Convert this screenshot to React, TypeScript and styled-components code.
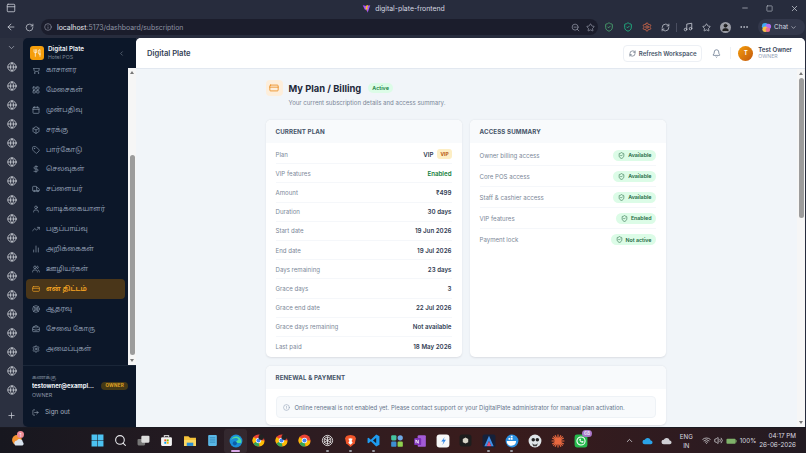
import { ReactNode } from "react";
import styled, { createGlobalStyle } from "styled-components";
import {
  ArrowLeft,
  BarChart2,
  Bell,
  Box,
  BriefcaseBusiness,
  Calendar,
  ChevronDown,
  ChevronLeft,
  ChevronUp,
  CircleAlert,
  CreditCard,
  DollarSign,
  Ellipsis,
  Globe,
  Info,
  LayoutGrid,
  LifeBuoy,
  LogOut,
  Minus,
  Music,
  PanelTop,
  Plus,
  RefreshCw,
  RotateCw,
  Search,
  Settings,
  ShieldCheck,
  ShoppingCart,
  Square,
  Star,
  Tag,
  TrendingUp,
  Truck,
  User,
  Users,
  Utensils,
  Volume2,
  Wifi,
  X,
  ZoomOut,
} from "lucide-react";

const font = `Inter, "Noto Sans", "Noto Sans Tamil", sans-serif`;

const GlobalStyle = createGlobalStyle`
  html, body { margin: 0; padding: 0; height: 100%; overflow: hidden; background: #272c3d; }
  #root { height: 100%; }
  * { box-sizing: border-box; }
`;

const Screen = styled.div`
  width: 806px;
  height: 453px;
  display: flex;
  flex-direction: column;
  font-family: ${font};
  background: #272c3d;
  overflow: hidden;
`;

const TitleBar = styled.div`
  height: 16px;
  flex: none;
  display: flex;
  align-items: center;
  justify-content: space-between;
  padding: 0 7px 0 6px;
  color: #c5c9d3;
`;

const PageTitle = styled.div`
  flex: 1;
  display: flex;
  align-items: center;
  justify-content: center;
  gap: 4px;
  font-size: 6.9px;
  color: #d5d8e0;
  padding-left: 50px;
`;

const WindowControls = styled.div`
  display: flex;
  align-items: center;
  gap: 17px;
  color: #c5c9d3;
`;

const Toolbar = styled.div`
  height: 22px;
  flex: none;
  display: flex;
  align-items: center;
  padding: 0 4px 0 6px;
  color: #c5c9d3;
`;

const NavButton = styled.div`
  width: 19px;
  display: flex;
  align-items: center;
  flex: none;
`;

const AddressBar = styled.div`
  width: 557px;
  height: 16px;
  border-radius: 8px;
  background: #1b1d2c;
  display: flex;
  align-items: center;
  gap: 5px;
  padding: 0 3px 0 3px;
  font-size: 6.9px;
  color: #8f93a3;
  margin-left: -3px;
  flex: none;
`;

const Host = styled.span`
  color: #e7e9ef;
`;

const AddressEnd = styled.div`
  margin-left: auto;
  display: flex;
  gap: 6px;
  align-items: center;
`;

const Extensions = styled.div`
  display: flex;
  align-items: center;
  gap: 9px;
  margin-left: 6px;
  flex: 1;
`;

const ToolbarDivider = styled.div`
  width: 1px;
  height: 9px;
  background: #4a4e60;
  margin: 0 -3px;
`;

const ProfileBubble = styled.div`
  width: 11px;
  height: 11px;
  border-radius: 50%;
  background: #9a9ca5;
  display: flex;
  align-items: center;
  justify-content: center;
  margin-right: -1px;
`;

const ChatPill = styled.div`
  margin-left: auto;
  height: 16px;
  width: 47px;
  border-radius: 8px;
  background: #33384b;
  display: flex;
  align-items: center;
  gap: 2px;
  padding: 0 3px;
  font-size: 6.4px;
  color: #d5d8e0;
`;

const Body = styled.div`
  flex: 1;
  min-height: 0;
  display: flex;
  padding-right: 1px;
`;

const TabStrip = styled.div`
  width: 23px;
  flex: none;
  display: flex;
  flex-direction: column;
  align-items: center;
  color: #c9ccd4;
  background: #2b3040;
  padding: 2px 0 5px 0;
`;

const TabToggle = styled.div`
  height: 15px;
  display: flex;
  align-items: center;
  margin-bottom: 2px;
  color: #a7abb8;
`;

const TabIcon = styled.div`
  height: 19px;
  flex: none;
  display: flex;
  align-items: center;
`;

const NewTab = styled.div`
  margin-top: auto;
  height: 14px;
  display: flex;
  align-items: center;
`;

const Sidebar = styled.aside`
  width: 113px;
  flex: none;
  background: #0c1729;
  border-radius: 5px 0 0 5px;
  display: flex;
  flex-direction: column;
  overflow: hidden;
`;

const Brand = styled.div`
  height: 30px;
  flex: none;
  display: flex;
  align-items: center;
  padding: 0 11px 0 7px;
  gap: 4px;
`;

const BrandLogo = styled.div`
  width: 14px;
  height: 14px;
  border-radius: 3px;
  background: #f59e0b;
  color: #fff;
  display: flex;
  align-items: center;
  justify-content: center;
`;

const BrandText = styled.div`
  flex: 1;
  line-height: 1;
`;

const BrandName = styled.div`
  font-size: 6.3px;
  font-weight: 600;
  color: #f1f5f9;
  margin-bottom: 2px;
`;

const BrandSub = styled.div`
  font-size: 5.2px;
  color: #7d8796;
`;

const NavArea = styled.div`
  height: 297px;
  flex: none;
  display: flex;
`;

const SideNav = styled.nav`
  flex: 1;
  min-width: 0;
  overflow: hidden;
  padding: 0 3px;
`;

const NavList = styled.div`
  margin-top: -8px;
  display: flex;
  flex-direction: column;
`;

const NavItem = styled.div<{ $active?: boolean }>`
  height: ${({ $active }) => ($active ? "20.5px" : "19.9px")};
  flex: none;
  display: flex;
  align-items: center;
  gap: 6px;
  padding: 0 6px;
  border-radius: 4px;
  font-size: 6.9px;
  white-space: nowrap;
  font-weight: ${({ $active }) => ($active ? 600 : 400)};
  color: ${({ $active }) => ($active ? "#f5a524" : "#8d9bae")};
  background: ${({ $active }) => ($active ? "#4a3619" : "transparent")};
`;

const ScrollTrack = styled.div`
  width: 8px;
  flex: none;
  background: #f6f6f6;
  display: flex;
  flex-direction: column;
  align-items: center;
`;

const ScrollArrow = styled.div<{ $down?: boolean }>`
  flex: none;
  width: 0;
  height: 0;
  border-left: 2.5px solid transparent;
  border-right: 2.5px solid transparent;
  border-bottom: ${({ $down }) => ($down ? "0" : "3px solid #777")};
  border-top: ${({ $down }) => ($down ? "3px solid #777" : "0")};
  margin: ${({ $down }) => ($down ? "auto 0 3px" : "3px 0 3px")};
`;

const ScrollThumb = styled.div<{ $offset: number; $size: number }>`
  flex: none;
  width: 5px;
  border-radius: 3px;
  background: #9c9c9c;
  margin-top: ${({ $offset }) => $offset}px;
  height: ${({ $size }) => $size}px;
`;

const SideFooter = styled.div`
  flex: 1;
  border-top: 1px solid #1a2638;
  padding: 7px 9px 0;
`;

const AccountLabel = styled.div`
  font-size: 5.6px;
  color: #748091;
  line-height: 8px;
`;

const AccountRow = styled.div`
  display: flex;
  align-items: center;
  justify-content: space-between;
  margin-right: -1px;
`;

const AccountEmail = styled.div`
  width: 63px;
  font-size: 5.9px;
  line-height: 9px;
  font-weight: 700;
  color: #f1f5f9;
  white-space: nowrap;
  overflow: hidden;
  text-overflow: ellipsis;
`;

const OwnerTag = styled.span`
  font-size: 4.6px;
  font-weight: 700;
  color: #e0a526;
  background: #453916;
  border-radius: 4px;
  padding: 1.5px 4px;
  letter-spacing: 0.2px;
`;

const AccountRole = styled.div`
  font-size: 5.4px;
  line-height: 8px;
  color: #8b95a5;
  margin-top: 1px;
`;

const SignOut = styled.div`
  display: flex;
  align-items: center;
  gap: 6px;
  font-size: 6.4px;
  line-height: 9px;
  color: #a4afbe;
  margin-top: 9px;
`;

const Main = styled.main`
  flex: 1;
  min-width: 0;
  display: flex;
  flex-direction: column;
  background: #f1f5f9;
  border-radius: 5px 5px 0 0;
  overflow: hidden;
`;

const Header = styled.header`
  height: 31px;
  flex: none;
  background: #fff;
  border-bottom: 1px solid #e2e8f0;
  display: flex;
  align-items: center;
  padding: 0 13px 0 11px;
`;

const HeaderTitle = styled.div`
  font-size: 7.6px;
  font-weight: 600;
  color: #334155;
  flex: 1;
`;

const RefreshButton = styled.div`
  height: 17px;
  width: 79px;
  border: 1px solid #edf0f5;
  border-radius: 4px;
  display: flex;
  align-items: center;
  justify-content: center;
  gap: 3px;
  font-size: 6.1px;
  font-weight: 600;
  color: #475569;
`;

const BellWrap = styled.div`
  margin: 0 9px 0 10px;
  color: #64748b;
  display: flex;
`;

const HeaderDivider = styled.div`
  width: 1px;
  height: 12px;
  background: #eef1f5;
`;

const Avatar = styled.div`
  width: 15px;
  height: 15px;
  border-radius: 50%;
  background: linear-gradient(135deg, #f59e0b, #c2570c);
  color: #fff;
  font-size: 5.5px;
  font-weight: 700;
  display: flex;
  align-items: center;
  justify-content: center;
  margin-left: 7px;
`;

const UserText = styled.div`
  margin-left: 5px;
  line-height: 1;
`;

const UserName = styled.div`
  font-size: 6.1px;
  font-weight: 600;
  color: #334155;
  margin-bottom: 1.5px;
`;

const UserRole = styled.div`
  font-size: 5.2px;
  color: #94a3b8;
`;

const ContentArea = styled.div`
  flex: 1;
  min-height: 0;
  display: flex;
`;

const Content = styled.div`
  flex: 1;
  min-width: 0;
  overflow: hidden;
  padding-right: 2px;
`;

const ContentInner = styled.div`
  width: 400px;
  margin: 0 auto;
  padding-top: 11px;
`;

const TitleRow = styled.div`
  display: flex;
  gap: 6px;
  height: 40px;
`;

const TitleIcon = styled.div`
  width: 17px;
  height: 16px;
  border-radius: 4px;
  background: #fdeedb;
  color: #ea8a1a;
  display: flex;
  align-items: center;
  justify-content: center;
`;

const TitleLine = styled.div`
  display: flex;
  align-items: center;
  gap: 7px;
  height: 16px;
`;

const PageHeading = styled.h1`
  margin: 0;
  font-size: 9.4px;
  font-weight: 700;
  color: #1e293b;
`;

const ActiveBadge = styled.span`
  font-size: 5.4px;
  font-weight: 600;
  color: #15803d;
  background: #dcfce7;
  border-radius: 5px;
  padding: 2px 4px;
`;

const PageSub = styled.div`
  font-size: 6.05px;
  color: #7b8798;
  margin-top: 3px;
`;

const CardGrid = styled.div`
  display: grid;
  grid-template-columns: 196px 196px;
  gap: 8px;
`;

const Card = styled.section`
  background: #fff;
  border-radius: 5px;
  box-shadow: 0 0.5px 2px rgba(15, 23, 42, 0.1);
  overflow: hidden;
`;

const CardHead = styled.div`
  height: 23px;
  background: #f8fafc;
  padding: 0 10px;
  display: flex;
  align-items: center;
  font-size: 6.2px;
  font-weight: 700;
  letter-spacing: 0.1px;
  color: #475569;
  text-transform: uppercase;
`;

const Rows = styled.div`
  padding: 2px 10px 1px;
`;

const Row = styled.div<{ $tall?: boolean }>`
  height: ${({ $tall }) => ($tall ? "21px" : "19.2px")};
  display: flex;
  align-items: center;
  justify-content: space-between;
  border-bottom: 1px solid #f5f7fa;
  &:last-child {
    border-bottom: 0;
  }
`;

const RowLabel = styled.span`
  font-size: 6.1px;
  color: #7b8798;
`;

const RowValue = styled.span<{ $green?: boolean }>`
  display: flex;
  align-items: center;
  gap: 4px;
  font-size: 6.2px;
  font-weight: 600;
  color: ${({ $green }) => ($green ? "#15803d" : "#334155")};
`;

const VipTag = styled.span`
  font-size: 4.8px;
  font-weight: 700;
  color: #b45309;
  background: #fdeec4;
  border-radius: 3px;
  padding: 2px 3px;
`;

const StatusPill = styled.span`
  display: flex;
  align-items: center;
  gap: 3px;
  height: 11px;
  padding: 0 4px 0 5px;
  border-radius: 6px;
  background: #dcfce7;
  color: #22683f;
  font-size: 5.3px;
  font-weight: 600;
`;

const RenewalCard = styled(Card)`
  margin-top: 9px;
`;

const RenewalBody = styled.div`
  padding: 7px 10px;
`;

const Notice = styled.div`
  height: 22px;
  background: #f8fafc;
  border: 1px solid #eef2f6;
  border-radius: 4px;
  display: flex;
  align-items: center;
  gap: 5px;
  padding: 0 6px;
  font-size: 5.95px;
  color: #64748b;
  white-space: nowrap;
`;

const Taskbar = styled.footer`
  height: 26px;
  flex: none;
  display: flex;
  align-items: center;
  background: linear-gradient(90deg, #17171f 0%, #2b1c22 35%, #3a1c1c 60%, #2e1b20 85%, #221a22 100%);
  border-top: 1px solid #1a1a22;
  color: #e4e4e8;
`;

const Weather = styled.div`
  width: 86px;
  flex: none;
  padding-left: 11px;
  display: flex;
  position: relative;
`;

const CountBadge = styled.span<{ $purple?: boolean }>`
  position: absolute;
  top: ${({ $purple }) => ($purple ? "1px" : "-3px")};
  left: ${({ $purple }) => ($purple ? "13px" : "17px")};
  background: ${({ $purple }) => ($purple ? "#a777c9" : "#ee8a96")};
  color: #fff;
  font-size: 4.8px;
  border-radius: 5px;
  padding: 0.5px 2px;
  line-height: 6px;
  min-width: 7px;
  text-align: center;
`;

const Apps = styled.div`
  display: flex;
  align-items: center;
`;

const AppSlot = styled.div<{ $open?: boolean; $running?: boolean }>`
  width: 23px;
  height: 24px;
  flex: none;
  display: flex;
  align-items: center;
  justify-content: center;
  position: relative;
  border-radius: 3px;
  background: ${({ $open }) => ($open ? "rgba(255,255,255,0.06)" : "transparent")};
  &::after {
    content: "";
    display: ${({ $running, $open }) => ($running || $open ? "block" : "none")};
    position: absolute;
    bottom: 1px;
    left: ${({ $open }) => ($open ? "7px" : "10px")};
    width: ${({ $open }) => ($open ? "9px" : "3px")};
    height: 1.5px;
    border-radius: 1px;
    background: ${({ $open }) => ($open ? "#d9a9e8" : "#9a9aa2")};
  }
`;

const Tray = styled.div`
  margin-left: auto;
  display: flex;
  align-items: center;
  gap: 3px;
  padding-right: 10px;
  font-size: 6.2px;
  color: #dcdce0;
`;

const TrayCloud = styled.div`
  display: flex;
  margin-left: 5px;
`;

const Lang = styled.div`
  text-align: center;
  line-height: 9px;
  margin: 0 6px 0 5px;
`;

const Clock = styled.div`
  text-align: right;
  line-height: 9px;
  font-size: 6.3px;
`;

const nav: { icon: ReactNode; label: string; active?: boolean }[] = [
  { icon: <ShoppingCart size={8} />, label: "காசாளர்" },
  { icon: <LayoutGrid size={8} />, label: "மேசைகள்" },
  { icon: <Calendar size={8} />, label: "முன்பதிவு" },
  { icon: <Box size={8} />, label: "சரக்கு" },
  { icon: <Tag size={8} />, label: "பார்கோடு" },
  { icon: <DollarSign size={8} />, label: "செலவுகள்" },
  { icon: <Truck size={8} />, label: "சப்ளையர்" },
  { icon: <User size={8} />, label: "வாடிக்கையாளர்" },
  { icon: <TrendingUp size={8} />, label: "பகுப்பாய்வு" },
  { icon: <BarChart2 size={8} />, label: "அறிக்கைகள்" },
  { icon: <Users size={8} />, label: "ஊழியர்கள்" },
  { icon: <CreditCard size={8} />, label: "என் திட்டம்", active: true },
  { icon: <LifeBuoy size={8} />, label: "ஆதரவு" },
  { icon: <BriefcaseBusiness size={8} />, label: "சேவை கோரு" },
  { icon: <Settings size={8} />, label: "அமைப்புகள்" },
];

const planRows: [string, string][] = [
  ["Amount", "₹499"],
  ["Duration", "30 days"],
  ["Start date", "19 Jun 2026"],
  ["End date", "19 Jul 2026"],
  ["Days remaining", "23 days"],
  ["Grace days", "3"],
  ["Grace end date", "22 Jul 2026"],
  ["Grace days remaining", "Not available"],
  ["Last paid", "18 May 2026"],
];

const accessRows: [string, string][] = [
  ["Owner billing access", "Available"],
  ["Core POS access", "Available"],
  ["Staff & cashier access", "Available"],
  ["VIP features", "Enabled"],
  ["Payment lock", "Not active"],
];

const ChromeIcon = ({ dot }: { dot?: boolean }) => (
  <svg width="13" height="13" viewBox="0 0 24 24">
    <circle cx="12" cy="12" r="11" fill="#ea4335" />
    <path d="M12 12L2.5 17.5A11 11 0 0 1 3 5.5z" fill="#fbbc05" />
    <path d="M12 12l-9.5 5.5A11 11 0 0 0 14 23z" fill="#34a853" />
    <path d="M12 12l2 11A11 11 0 0 0 23 12z" fill="#fbbc05" />
    <circle cx="12" cy="12" r="5" fill="#fff" />
    <circle cx="12" cy="12" r="3.8" fill="#4285f4" />
    {dot && <circle cx="17" cy="6" r="5" fill="#222" />}
  </svg>
);

const taskApps: { icon: ReactNode; open?: boolean; running?: boolean; badge?: string }[] = [
  {
    icon: (
      <svg width="13" height="13" viewBox="0 0 24 24">
        <path d="M1 1h10.5v10.5H1zM12.5 1H23v10.5H12.5zM1 12.5h10.5V23H1zM12.5 12.5H23V23H12.5z" fill="#4cc2f1" />
      </svg>
    ),
  },
  { icon: <Search size={13} color="#e8e8ec" /> },
  {
    icon: (
      <svg width="13" height="13" viewBox="0 0 24 24">
        <rect x="1" y="9" width="14" height="12" rx="2" fill="#777" />
        <rect x="8" y="3" width="15" height="13" rx="2" fill="#ddd" />
      </svg>
    ),
  },
  {
    icon: (
      <svg width="13" height="13" viewBox="0 0 24 24">
        <rect x="2" y="6" width="20" height="16" rx="2" fill="#f3f3f3" />
        <path d="M8 6V3h8v3" fill="none" stroke="#ccc" strokeWidth="2" />
        <path d="M8 10h3.5v3.5H8z" fill="#f25022" />
        <path d="M12.5 10H16v3.5h-3.5z" fill="#7fba00" />
        <path d="M8 14.5h3.5V18H8z" fill="#00a4ef" />
        <path d="M12.5 14.5H16V18h-3.5z" fill="#ffb900" />
      </svg>
    ),
  },
  {
    icon: (
      <svg width="14" height="13" viewBox="0 0 24 24">
        <path d="M1 4h8l3 3h11v15H1z" fill="#f6c33b" />
        <path d="M1 11h22v11H1z" fill="#fbd863" />
        <path d="M6 22v-6h12v6" fill="#2a8fd8" />
      </svg>
    ),
  },
  {
    icon: (
      <svg width="13" height="13" viewBox="0 0 24 24">
        <rect x="4" y="2" width="16" height="20" rx="1.5" fill="#5ab7e6" />
        <path d="M7 7h10M7 11h10M7 15h10" stroke="#2b7fb0" strokeWidth="1.4" />
      </svg>
    ),
  },
  {
    open: true,
    icon: (
      <svg width="14" height="14" viewBox="0 0 24 24">
        <circle cx="12" cy="12" r="11" fill="#1a8fd8" />
        <path d="M3 11c2-6 8-8 13-6 4 2 6 6 5 10-3 1-8 1-9-2 1-2 4-2 4-4-2-3-9-3-13 2z" fill="#4fdc9a" />
        <circle cx="10" cy="16" r="3.5" fill="#0d5ea8" />
      </svg>
    ),
  },
  { icon: <ChromeIcon dot /> },
  { icon: <ChromeIcon dot /> },
  { icon: <ChromeIcon /> },
  {
    running: true,
    icon: (
      <svg width="13" height="13" viewBox="0 0 24 24" fill="none" stroke="#e8e8e8" strokeWidth="1.6">
        <circle cx="12" cy="12" r="9.5" />
        <path d="M12 5l6 3.5v7L12 19l-6-3.5v-7z" />
        <path d="M12 5v14M6 8.5l12 7M18 8.5l-12 7" />
      </svg>
    ),
  },
  {
    running: true,
    icon: (
      <svg width="13" height="14" viewBox="0 0 24 24">
        <path d="M12 1l5 1 3 1 2 4-2 9-8 7-8-7-2-9 2-4 3-1z" fill="#f1562b" />
        <path d="M12 7l4 1-2 4 2 3-4 4-4-4 2-3-2-4z" fill="#fff" />
      </svg>
    ),
  },
  {
    running: true,
    icon: (
      <svg width="13" height="13" viewBox="0 0 24 24">
        <path d="M17 1l6 3v16l-6 3L7 13.5 3 17l-2-1V8l2-1 4 3.5z" fill="#1f9cf0" />
        <path d="M17 7l-6 5 6 5z" fill="#17202e" />
      </svg>
    ),
  },
  {
    icon: (
      <svg width="14" height="14" viewBox="0 0 24 24">
        <rect x="2" y="2" width="9" height="9" rx="2" fill="#45c4a0" />
        <rect x="13" y="2" width="9" height="9" rx="4.5" fill="#6ea9e6" />
        <rect x="2" y="13" width="9" height="9" rx="2" fill="#3d8fd1" />
        <rect x="13" y="13" width="9" height="9" rx="2" fill="#8fd14f" />
      </svg>
    ),
  },
  {
    icon: (
      <svg width="14" height="14" viewBox="0 0 24 24">
        <rect x="8" y="2" width="14" height="20" rx="2" fill="#a35bd6" />
        <rect x="2" y="7" width="12" height="12" rx="2" fill="#7b2fb5" />
        <path d="M5 16v-6l4 6v-6" stroke="#fff" strokeWidth="1.4" fill="none" />
      </svg>
    ),
  },
  {
    icon: (
      <svg width="14" height="14" viewBox="0 0 24 24">
        <rect x="1" y="1" width="22" height="22" rx="5" fill="#f7f7f7" />
        <path d="M15 5l-6 8h4l-2 6 6-9h-4z" fill="#2f86e8" />
      </svg>
    ),
  },
  {
    icon: (
      <svg width="13" height="13" viewBox="0 0 24 24">
        <rect x="1" y="1" width="22" height="22" rx="5" fill="#1d1d1d" />
        <path d="M7 9l5-2.5L17 9v6l-5 2.5L7 15z" fill="#d8d4c8" />
      </svg>
    ),
  },
  {
    running: true,
    icon: (
      <svg width="14" height="14" viewBox="0 0 24 24">
        <rect x="1" y="1" width="22" height="22" rx="3" fill="#15213a" />
        <path d="M12 3L4 21h4l4-9 4 9h4z" fill="#3f8fe8" />
        <path d="M12 12l-4 9h8z" fill="#e0527a" />
      </svg>
    ),
  },
  {
    running: true,
    icon: (
      <svg width="14" height="14" viewBox="0 0 24 24">
        <circle cx="12" cy="12" r="11" fill="#2a8fe0" />
        <path d="M3 12h16c0 5-3 8-8 8-5 0-8-3-8-8z" fill="#fff" />
        <path d="M6 10V7h3v3zM10 10V7h3v3zM10 6V3h3v3z" fill="#fff" />
      </svg>
    ),
  },
  {
    icon: (
      <svg width="14" height="14" viewBox="0 0 24 24">
        <circle cx="12" cy="12" r="11" fill="#dfe5e8" />
        <circle cx="9" cy="10" r="3" fill="#222" />
        <circle cx="16" cy="10" r="3" fill="#222" />
        <path d="M7 16c3 3 7 3 10 0l-2 5H9z" fill="#444" />
      </svg>
    ),
  },
  {
    icon: (
      <svg width="14" height="14" viewBox="0 0 24 24" stroke="#e8683f" strokeWidth="2">
        <path d="M12 1v22M1 12h22M4 4l16 16M20 4L4 20M7 2l10 20M17 2L7 22M2 7l20 10M22 7L2 17" />
        <circle cx="12" cy="12" r="5" fill="#e8683f" />
      </svg>
    ),
  },
  {
    badge: "68",
    icon: (
      <svg width="14" height="14" viewBox="0 0 24 24">
        <rect x="1" y="1" width="22" height="22" rx="4" fill="#25b84c" />
        <circle cx="12" cy="12" r="7" fill="none" stroke="#fff" strokeWidth="1.8" />
        <path d="M9 8.5c0 4 3 6.5 6.5 6.5l1-2-2-1-1 1c-1-.5-2-1.5-2.5-2.5l1-1-1-2z" fill="#fff" />
      </svg>
    ),
  },
];

const App = () => {
  return (
    <Screen>
      <GlobalStyle />
      <TitleBar>
        <PanelTop size={10} />
        <PageTitle>
          <svg width="9" height="9" viewBox="0 0 24 24">
            <path d="M2 3l10 2 10-2-7 20-3-9-4 2z" fill="#a855f7" />
            <path d="M12 3l5 0-4 8 3 0-5 8 1-6-3 0z" fill="#fbbf24" />
          </svg>
          digital-plate-frontend
        </PageTitle>
        <WindowControls>
          <Minus size={8} />
          <Square size={7} />
          <X size={9} />
        </WindowControls>
      </TitleBar>

      <Toolbar>
        <NavButton>
          <ArrowLeft size={10} />
        </NavButton>
        <NavButton>
          <RotateCw size={9} />
        </NavButton>
        <AddressBar>
          <Info size={8} />
          <span>
            <Host>localhost</Host>:5173/dashboard/subscription
          </span>
          <AddressEnd>
            <ZoomOut size={9} />
            <Star size={9} />
          </AddressEnd>
        </AddressBar>
        <Extensions>
          <ShieldCheck size={10} color="#4caf72" />
          <ShieldCheck size={10} color="#1fc08a" />
          <Settings size={10} color="#d96a4a" />
          <RefreshCw size={9} />
          <ToolbarDivider />
          <Music size={10} />
          <Star size={9} />
          <ProfileBubble>
            <User size={9} color="#111" fill="#222" />
          </ProfileBubble>
          <Ellipsis size={10} />
          <ChatPill>
            <svg width="11" height="11" viewBox="0 0 24 24">
              <circle cx="9" cy="9" r="7" fill="#3fa9f5" />
              <circle cx="16" cy="10" r="6" fill="#b26cf0" />
              <circle cx="9" cy="16" r="6" fill="#f5c04a" />
              <circle cx="15" cy="17" r="5" fill="#ef6c8f" />
            </svg>
            Chat
            <ChevronDown size={7} />
          </ChatPill>
        </Extensions>
      </Toolbar>

      <Body>
        <TabStrip>
          <TabToggle>
            <ChevronDown size={9} />
          </TabToggle>
          {Array.from({ length: 18 }, (_, i) => (
            <TabIcon key={i}>
              <Globe size={10} />
            </TabIcon>
          ))}
          <NewTab>
            <Plus size={9} />
          </NewTab>
        </TabStrip>

        <Sidebar>
          <Brand>
            <BrandLogo>
              <Utensils size={8} />
            </BrandLogo>
            <BrandText>
              <BrandName>Digital Plate</BrandName>
              <BrandSub>Hotel POS</BrandSub>
            </BrandText>
            <ChevronLeft size={7} color="#7d8796" />
          </Brand>
          <NavArea>
            <SideNav>
              <NavList>
                {nav.map((item) => (
                  <NavItem key={item.label} $active={item.active}>
                    {item.icon}
                    {item.label}
                  </NavItem>
                ))}
              </NavList>
            </SideNav>
            <ScrollTrack>
              <ScrollArrow />
              <ScrollThumb $offset={78} $size={200} />
              <ScrollArrow $down />
            </ScrollTrack>
          </NavArea>
          <SideFooter>
            <AccountLabel>கணக்கு</AccountLabel>
            <AccountRow>
              <AccountEmail>testowner@example.com</AccountEmail>
              <OwnerTag>OWNER</OwnerTag>
            </AccountRow>
            <AccountRole>OWNER</AccountRole>
            <SignOut>
              <LogOut size={7} />
              Sign out
            </SignOut>
          </SideFooter>
        </Sidebar>

        <Main>
          <Header>
            <HeaderTitle>Digital Plate</HeaderTitle>
            <RefreshButton>
              <RefreshCw size={7} />
              Refresh Workspace
            </RefreshButton>
            <BellWrap>
              <Bell size={9} />
            </BellWrap>
            <HeaderDivider />
            <Avatar>T</Avatar>
            <UserText>
              <UserName>Test Owner</UserName>
              <UserRole>OWNER</UserRole>
            </UserText>
          </Header>

          <ContentArea>
            <Content>
              <ContentInner>
                <TitleRow>
                  <TitleIcon>
                    <CreditCard size={10} />
                  </TitleIcon>
                  <div>
                    <TitleLine>
                      <PageHeading>My Plan / Billing</PageHeading>
                      <ActiveBadge>Active</ActiveBadge>
                    </TitleLine>
                    <PageSub>Your current subscription details and access summary.</PageSub>
                  </div>
                </TitleRow>

                <CardGrid>
                  <Card>
                    <CardHead>Current plan</CardHead>
                    <Rows>
                      <Row>
                        <RowLabel>Plan</RowLabel>
                        <RowValue>
                          VIP <VipTag>VIP</VipTag>
                        </RowValue>
                      </Row>
                      <Row>
                        <RowLabel>VIP features</RowLabel>
                        <RowValue $green>Enabled</RowValue>
                      </Row>
                      {planRows.map(([label, value]) => (
                        <Row key={label}>
                          <RowLabel>{label}</RowLabel>
                          <RowValue>{value}</RowValue>
                        </Row>
                      ))}
                    </Rows>
                  </Card>
                  <Card>
                    <CardHead>Access summary</CardHead>
                    <Rows>
                      {accessRows.map(([label, value]) => (
                        <Row key={label} $tall>
                          <RowLabel>{label}</RowLabel>
                          <StatusPill>
                            <ShieldCheck size={7} />
                            {value}
                          </StatusPill>
                        </Row>
                      ))}
                    </Rows>
                  </Card>
                </CardGrid>

                <RenewalCard>
                  <CardHead>Renewal &amp; payment</CardHead>
                  <RenewalBody>
                    <Notice>
                      <CircleAlert size={7} color="#94a3b8" />
                      Online renewal is not enabled yet. Please contact support or your DigitalPlate administrator for manual plan activation.
                    </Notice>
                  </RenewalBody>
                </RenewalCard>
              </ContentInner>
            </Content>
            <ScrollTrack>
              <ScrollArrow />
              <ScrollThumb $offset={0} $size={140} />
              <ScrollArrow $down />
            </ScrollTrack>
          </ContentArea>
        </Main>
      </Body>

      <Taskbar>
        <Weather>
          <svg width="13" height="13" viewBox="0 0 24 24">
            <circle cx="11" cy="11" r="9" fill="#f59331" />
            <path d="M8 21a5 5 0 0 1 3-9 6 6 0 0 1 11 3 3.5 3.5 0 0 1-1 6z" fill="#d9e3ee" />
          </svg>
          <CountBadge>1</CountBadge>
        </Weather>
        <Apps>
          {taskApps.map((app, i) => (
            <AppSlot key={i} $open={app.open} $running={app.running}>
              {app.icon}
              {app.badge && <CountBadge $purple>{app.badge}</CountBadge>}
            </AppSlot>
          ))}
        </Apps>
        <Tray>
          <ChevronUp size={9} />
          <TrayCloud>
            <svg width="11" height="8" viewBox="0 0 24 16">
              <path d="M6 15a5 5 0 0 1 0-10 7 7 0 0 1 13 2 4 4 0 0 1 0 8z" fill="#2aa3e8" />
            </svg>
          </TrayCloud>
          <TrayCloud>
            <svg width="11" height="8" viewBox="0 0 24 16">
              <path d="M6 15a5 5 0 0 1 0-10 7 7 0 0 1 13 2 4 4 0 0 1 0 8z" fill="#cfcfd4" />
            </svg>
          </TrayCloud>
          <Lang>
            ENG
            <br />
            IN
          </Lang>
          <Wifi size={9} />
          <Volume2 size={9} />
          <svg width="11" height="8" viewBox="0 0 24 16">
            <rect x="1" y="3" width="20" height="11" rx="2" fill="#7fb26a" />
            <rect x="21" y="6" width="2" height="5" fill="#7fb26a" />
          </svg>
          <span>100%</span>
          <Clock>
            04:17 PM
            <br />
            26-06-2026
          </Clock>
        </Tray>
      </Taskbar>
    </Screen>
  );
};

export default App;
